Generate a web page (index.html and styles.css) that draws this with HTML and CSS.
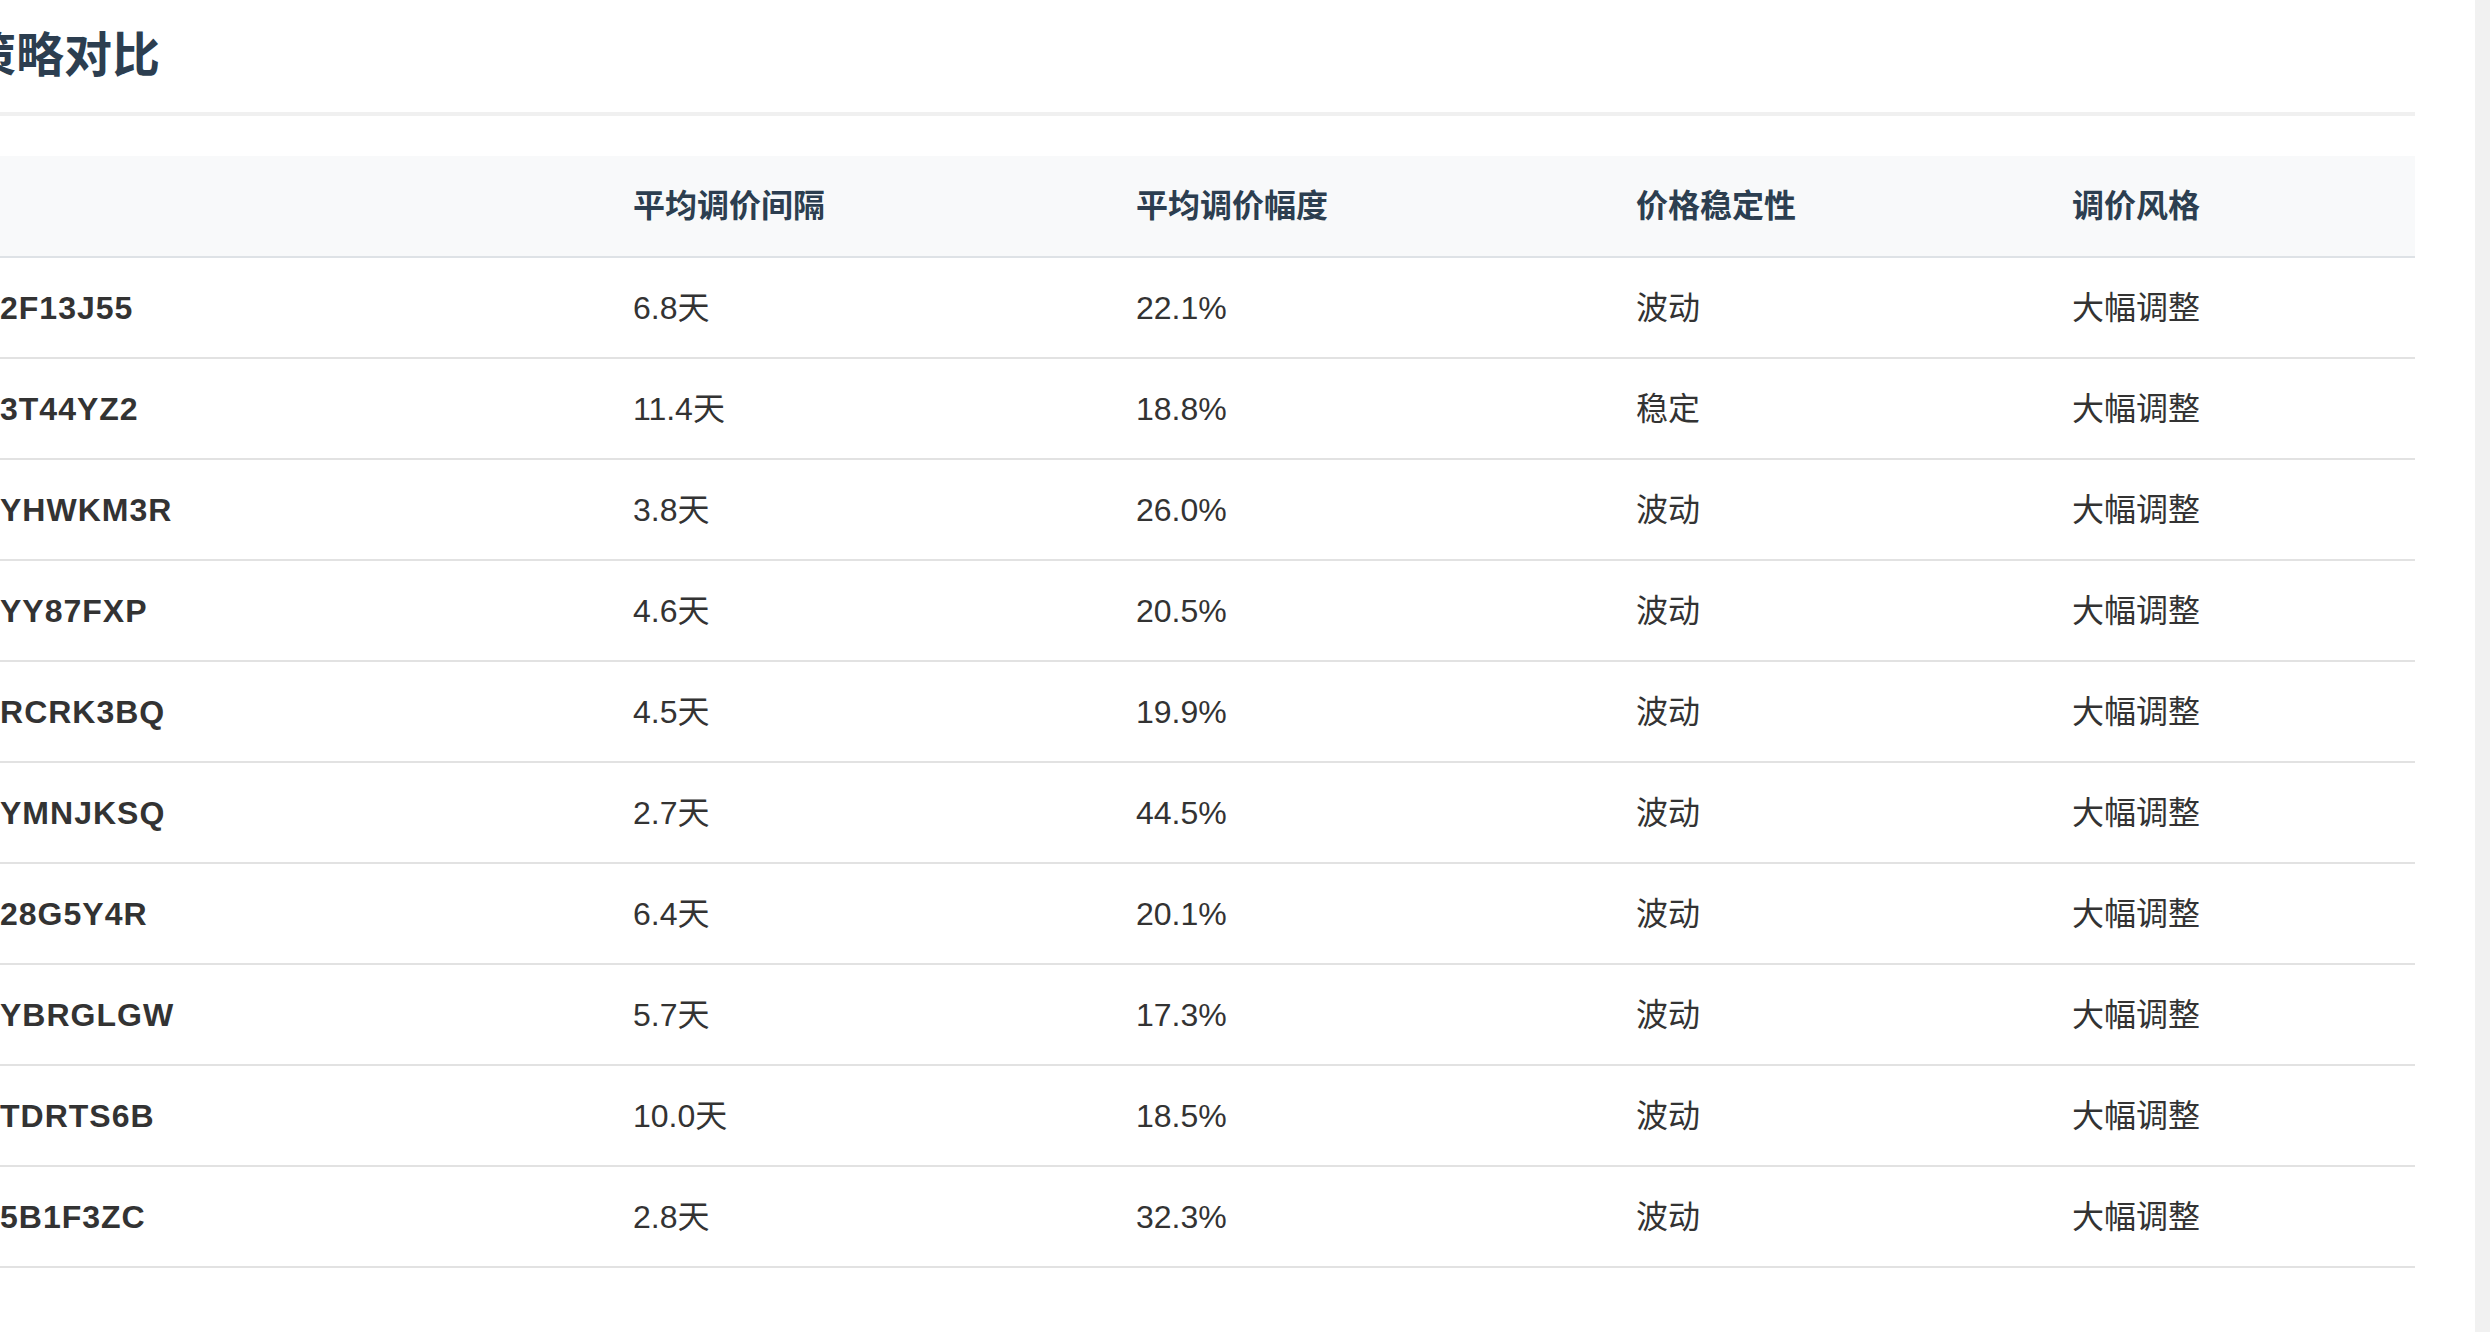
FILE: index.html
```html
<!DOCTYPE html>
<html lang="zh-CN">
<head>
<meta charset="utf-8">
<title>调价策略对比</title>
<link rel="stylesheet" href="styles.css">
</head>
<body>
<div class="screen">
  <main class="main">
    <section class="panel">
      <h2 class="panel-title">调价策略对比</h2>
      <table class="compare">
        <colgroup>
          <col class="c-id">
          <col class="c-interval">
          <col class="c-range">
          <col class="c-stable">
          <col class="c-style">
        </colgroup>
        <thead>
          <tr>
            <th class="cell-id">产品</th>
            <th>平均调价间隔</th>
            <th>平均调价幅度</th>
            <th>价格稳定性</th>
            <th>调价风格</th>
          </tr>
        </thead>
        <tbody>
          <tr><td class="cell-id">B0C2F13J55</td><td>6.8天</td><td>22.1%</td><td>波动</td><td>大幅调整</td></tr>
          <tr><td class="cell-id">B0D3T44YZ2</td><td>11.4天</td><td>18.8%</td><td>稳定</td><td>大幅调整</td></tr>
          <tr><td class="cell-id">B0CYHWKM3R</td><td>3.8天</td><td>26.0%</td><td>波动</td><td>大幅调整</td></tr>
          <tr><td class="cell-id">B0DYY87FXP</td><td>4.6天</td><td>20.5%</td><td>波动</td><td>大幅调整</td></tr>
          <tr><td class="cell-id">B0DRCRK3BQ</td><td>4.5天</td><td>19.9%</td><td>波动</td><td>大幅调整</td></tr>
          <tr><td class="cell-id">B0CYMNJKSQ</td><td>2.7天</td><td>44.5%</td><td>波动</td><td>大幅调整</td></tr>
          <tr><td class="cell-id">B0D28G5Y4R</td><td>6.4天</td><td>20.1%</td><td>波动</td><td>大幅调整</td></tr>
          <tr><td class="cell-id">B0CYBRGLGW</td><td>5.7天</td><td>17.3%</td><td>波动</td><td>大幅调整</td></tr>
          <tr><td class="cell-id">B0DTDRTS6B</td><td>10.0天</td><td>18.5%</td><td>波动</td><td>大幅调整</td></tr>
          <tr><td class="cell-id">B0D5B1F3ZC</td><td>2.8天</td><td>32.3%</td><td>波动</td><td>大幅调整</td></tr>
        </tbody>
      </table>
    </section>
  </main>
  <div class="scrollbar"></div>
</div>
</body>
</html>
```

FILE: styles.css
```css
html, body {
  margin: 0;
  padding: 0;
  height: 100%;
  overflow: hidden;
  background: #ffffff;
}

body {
  font-family: "Liberation Sans", "Noto Sans CJK SC", sans-serif;
  color: #333333;
}

.screen {
  display: flex;
  height: 100vh;
}

.main {
  flex: 1;
  overflow: hidden;
  background: #ffffff;
}

.scrollbar {
  width: 15px;
  flex: 0 0 15px;
  background: #f1f1f1;
}

.panel {
  margin-left: -128px;
  width: 2543px;
}

.panel-title {
  margin: 0;
  padding: 20px 0;
  font-size: 48px;
  line-height: 72px;
  font-weight: 700;
  color: #2c3e50;
  border-bottom: 4px solid #f0f0f0;
}

.compare {
  margin-top: 40px;
  width: 100%;
  table-layout: fixed;
  border-collapse: separate;
  border-spacing: 0;
  font-size: 32px;
  line-height: 48px;
}

.c-id { width: 737px; }
.c-interval { width: 503px; }
.c-range { width: 500px; }
.c-stable { width: 436px; }
.c-style { width: 367px; }

.compare th,
.compare td {
  box-sizing: border-box;
  padding: 0 0 0 24px;
  text-align: left;
  vertical-align: middle;
  white-space: nowrap;
  overflow: hidden;
}

.compare th {
  height: 102px;
  background: #f8f9fa;
  color: #2c3e50;
  font-weight: 700;
  border-bottom: 2px solid #dee2e6;
}

.compare td {
  height: 101px;
  border-bottom: 2px solid #e2e2e2;
  font-weight: 400;
}

.compare .cell-id {
  padding-left: 61px;
}

.compare td.cell-id {
  font-weight: 700;
  letter-spacing: 1px;
}
```
